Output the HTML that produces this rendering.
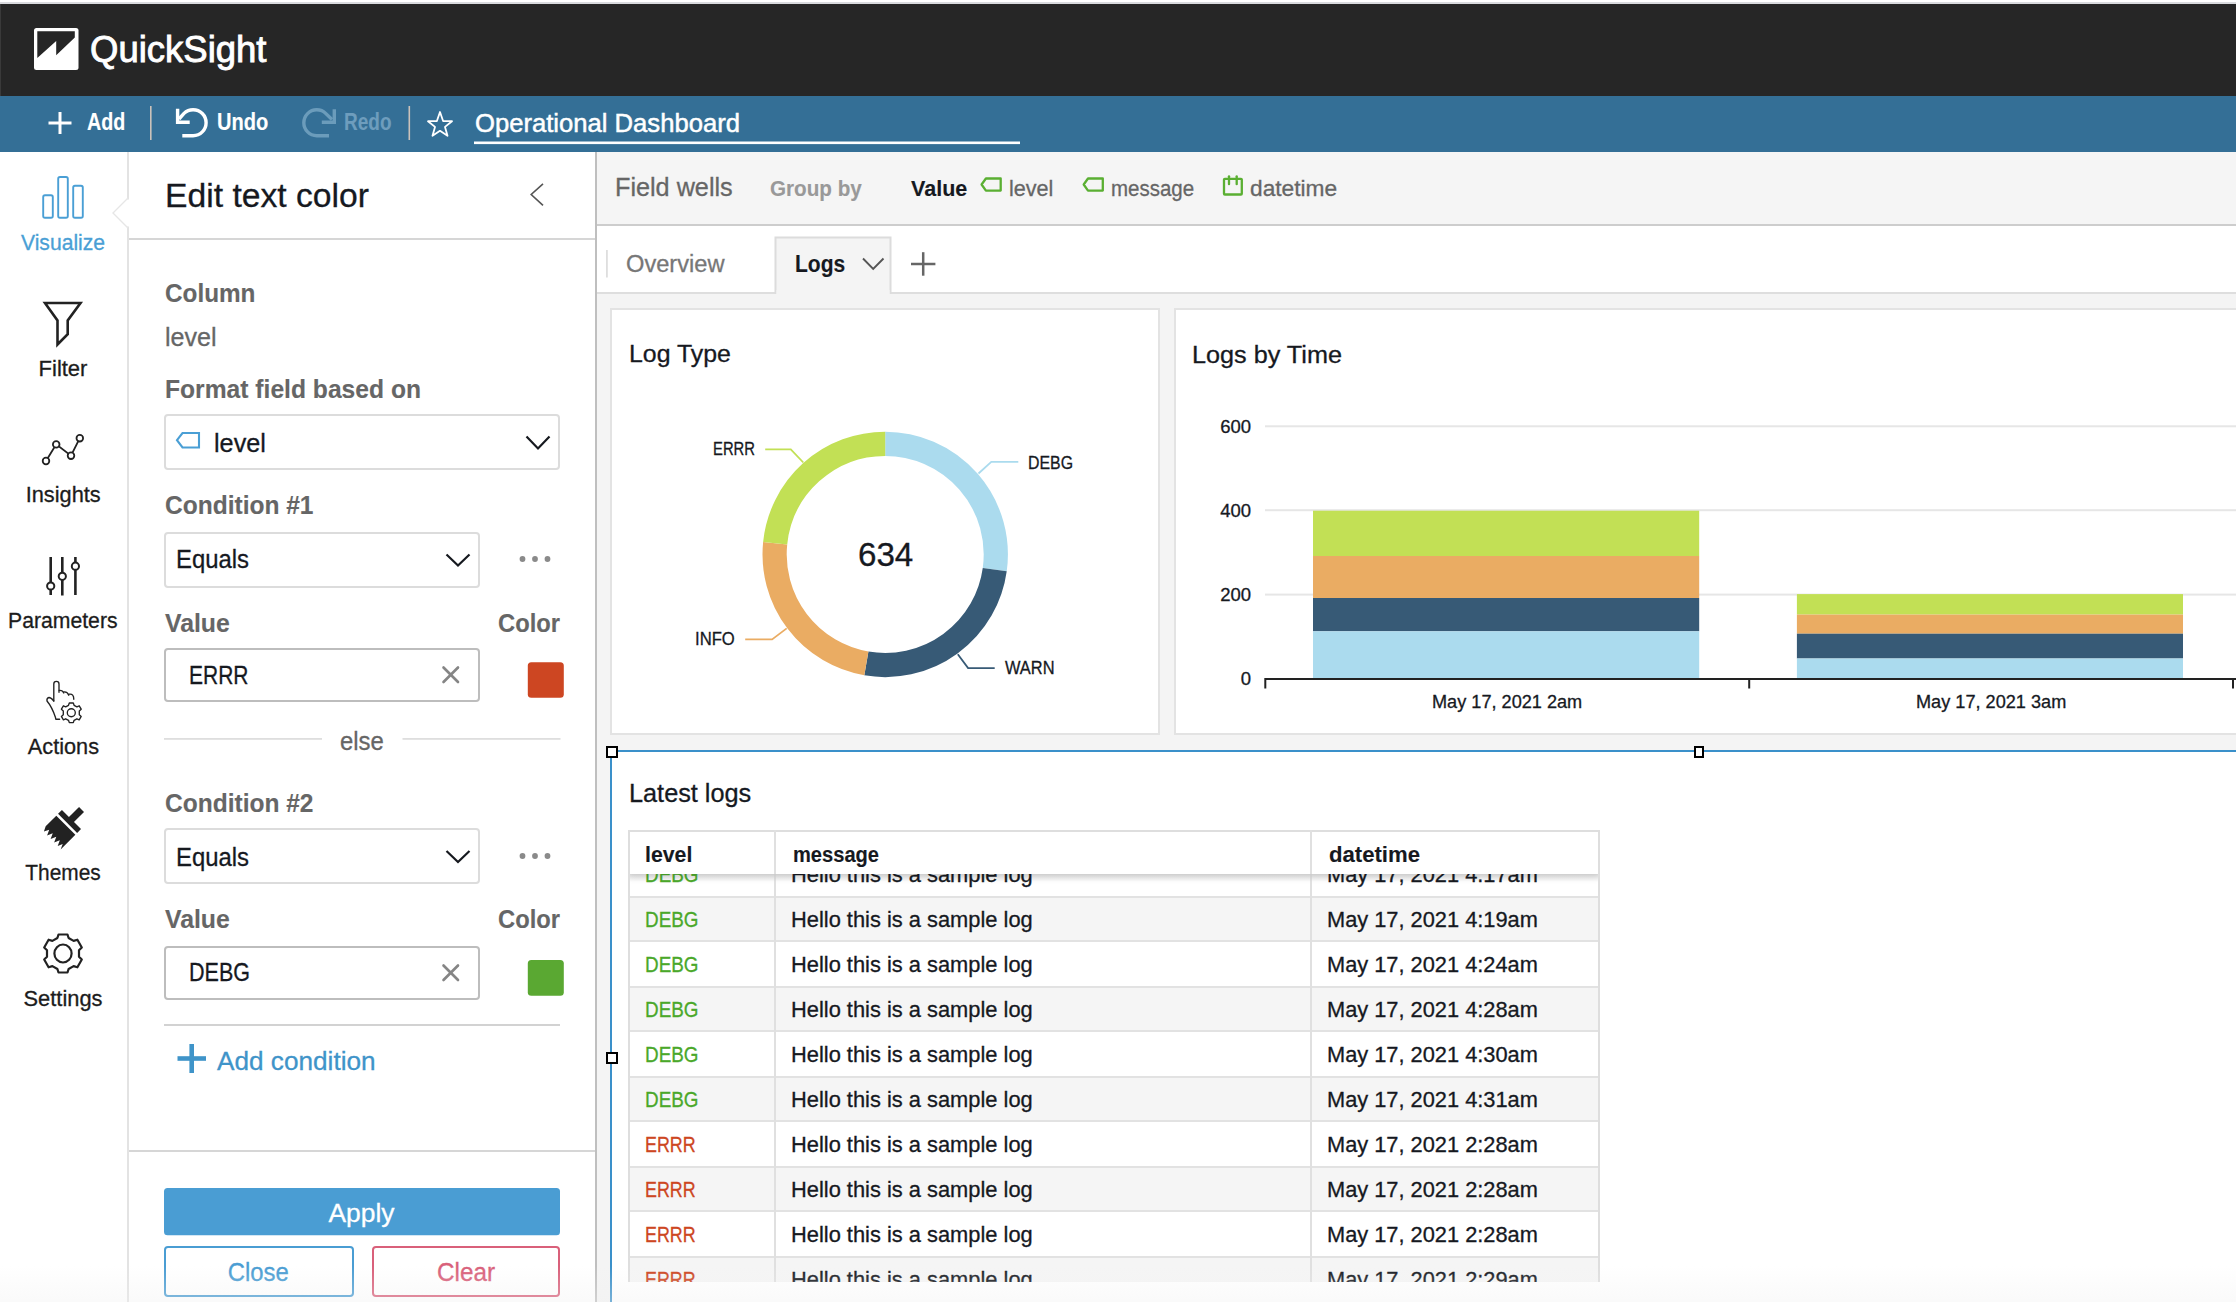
<!DOCTYPE html>
<html><head><meta charset="utf-8"><title>QuickSight</title>
<style>
html,body{margin:0;padding:0;}
body{width:2236px;height:1302px;overflow:hidden;position:relative;background:#fff;font-family:"Liberation Sans",sans-serif;}
.a{position:absolute;}
.t{position:absolute;line-height:1;white-space:nowrap;-webkit-text-stroke:0.3px currentColor;}
svg.a{overflow:visible;}
</style></head><body>
<div class="a" style="left:0px;top:0px;width:2236px;height:2px;background:#fff"></div>
<div class="a" style="left:0px;top:2px;width:2236px;height:2px;background:#d9dade"></div>
<div class="a" style="left:0px;top:4px;width:2236px;height:92px;background:#262626"></div>
<div class="a" style="left:0px;top:4px;width:1px;height:92px;background:#3a3a3a"></div>
<div class="a" style="left:0px;top:96px;width:2236px;height:56px;background:#346f96"></div>
<div class="a" style="left:0px;top:152px;width:127px;height:1150px;background:#fff"></div>
<div class="a" style="left:127px;top:152px;width:2px;height:1150px;background:#e3e3e3"></div>
<div class="a" style="left:129px;top:152px;width:466px;height:1150px;background:#fff"></div>
<div class="a" style="left:595px;top:152px;width:2px;height:1150px;background:#bfbfbf"></div>
<div class="a" style="left:129px;top:238px;width:466px;height:2px;background:#d6d6d6"></div>
<div class="a" style="left:129px;top:1150px;width:466px;height:2px;background:#d6d6d6"></div>
<div class="a" style="left:597px;top:152px;width:1639px;height:1150px;background:#f4f4f4"></div>
<div class="a" style="left:597px;top:152px;width:1639px;height:72px;background:#f5f5f5"></div>
<div class="a" style="left:597px;top:224px;width:1639px;height:2px;background:#cdcdcd"></div>
<div class="a" style="left:597px;top:226px;width:1639px;height:66px;background:#fff"></div>
<div class="a" style="left:597px;top:292px;width:1639px;height:2px;background:#dedede"></div>
<svg class="a" style="left:0;top:0" width="2236" height="152">
<rect x="34" y="28" width="44.5" height="42" rx="2.5" fill="#fff"/>
<polygon points="37.3,31.2 74.8,31.2 74.8,37.5 56.2,55.2 56.2,41 37.3,58" fill="#262626"/>
<g stroke="#fff" stroke-width="3" fill="none">
<line x1="48.5" y1="123" x2="71.5" y2="123"/><line x1="60" y1="112" x2="60" y2="134"/>
</g>
<rect x="150" y="106" width="1.6" height="34" fill="#cbc2ba"/>
<rect x="408.5" y="106" width="1.6" height="34" fill="#cbc2ba"/>
<g fill="none" stroke="#fff" stroke-width="3.4" stroke-linejoin="miter">
<path d="M182.3 135.7 H193.1 A13 13 0 0 0 193.1 109.7 A13 13 0 0 0 184 113.4 L179 119"/>
<path d="M177.6 108.8 V122.2 H189.7"/>
</g>
<g fill="none" stroke="#6b9cbb" stroke-width="3.4" stroke-linejoin="miter">
<path d="M329 135.7 H316.75 A12.95 12.95 0 0 1 316.75 109.8 A12.95 12.95 0 0 1 325.9 113.6 L332 119.5"/>
<path d="M334.3 109.2 V122.2 H321.8"/>
</g>
<polygon points="440,112 443.1,121 452,121.2 445,126.9 447.5,135.8 440,130.8 432.5,135.8 435,126.9 428,121.2 436.9,121" fill="none" stroke="#fff" stroke-width="1.8" stroke-linejoin="round"/>
<rect x="474" y="141.5" width="546" height="2.6" fill="#fff"/>
</svg>
<div class="t" style="left:89.90px;top:31px;font-size:37.30px;color:#fff;transform:scaleX(0.9786);transform-origin:left top;-webkit-text-stroke:0.9px #fff;">QuickSight</div>
<div class="t" style="left:87.00px;top:111px;font-size:23.30px;color:#fff;font-weight:700;-webkit-text-stroke:0.12px currentColor;transform:scaleX(0.8456);transform-origin:left top;">Add</div>
<div class="t" style="left:216.70px;top:111px;font-size:23.30px;color:#fff;font-weight:700;-webkit-text-stroke:0.12px currentColor;transform:scaleX(0.8618);transform-origin:left top;">Undo</div>
<div class="t" style="left:343.70px;top:111px;font-size:23.30px;color:#6e9dbd;font-weight:700;-webkit-text-stroke:0.12px currentColor;transform:scaleX(0.8154);transform-origin:left top;">Redo</div>
<div class="t" style="left:474.50px;top:110px;font-size:26.40px;color:#fff;transform:scaleX(0.9708);transform-origin:left top;-webkit-text-stroke:0.5px #fff;">Operational Dashboard</div>
<svg class="a" style="left:0;top:152px" width="127" height="1150" viewBox="0 152 127 1150">
<g fill="none" stroke="#4a9fd5" stroke-width="1.9">
<rect x="43.2" y="195.3" width="9.6" height="22.4" rx="1.8"/>
<rect x="58.2" y="177" width="9.6" height="40.7" rx="1.8"/>
<rect x="73.2" y="185.8" width="9.6" height="31.9" rx="1.8"/>
</g>
<polygon points="113,213 127,199 127,227" fill="#fff"/><rect x="126.5" y="199.5" width="3" height="27" fill="#fff"/>
<polyline points="128,198 113,213 128,228" fill="none" stroke="#e6e6e6" stroke-width="1.4"/>
<path d="M45 303 H80.5 L67.7 320.5 V334.2 L57.5 344.5 V320.5 Z" fill="none" stroke="#222" stroke-width="2.6" stroke-linejoin="miter"/>
<g stroke="#222" stroke-width="1.8" fill="#fff">
<polyline points="46,461 56.2,444.4 71,455.7 79.8,438.2" fill="none"/>
<circle cx="46" cy="461" r="3.3"/><circle cx="56.2" cy="444.4" r="3.3"/><circle cx="71" cy="455.7" r="3.3"/><circle cx="79.8" cy="438.2" r="3.3"/>
</g>
<g stroke="#222" stroke-width="2.6">
<line x1="50.7" y1="557" x2="50.7" y2="595"/><line x1="62.3" y1="557" x2="62.3" y2="595.5"/><line x1="75.4" y1="557" x2="75.4" y2="595"/>
</g>
<g stroke="#222" stroke-width="2" fill="#fff">
<circle cx="50.7" cy="586" r="3.6"/><circle cx="62.3" cy="576.3" r="3.6"/><circle cx="75.4" cy="566.2" r="3.6"/>
</g>
<g fill="none" stroke="#222" stroke-width="1.35" stroke-linejoin="round" stroke-linecap="round">
<path d="M53.8 701 V684 A2.6 2.6 0 0 1 59 684 V692.3"/>
<path d="M59.2 690.4 Q62.5 690 63.8 693"/>
<path d="M63.8 691.9 Q67.5 691.5 68.8 695.2"/>
<path d="M69.2 694.2 Q73.8 693.5 73.8 699.2"/>
<path d="M53.8 701 Q51 697.5 49 697.5 Q46.5 698 47 701 Q52 707 55.4 717.2 L55.8 719.2 H59.6"/>
</g>
<g transform="translate(71.3,712.8)" fill="none" stroke="#222" stroke-width="1.35">
<path d="M-2 -9.8 L2 -9.8 L2.8 -7.5 L5.6 -6 L7.9 -7 L9.9 -3.6 L8 -1.9 V1.9 L9.9 3.6 L7.9 7 L5.6 6 L2.8 7.5 L2 9.8 H-2 L-2.8 7.5 L-5.6 6 L-7.9 7 L-9.9 3.6 L-8 1.9 V-1.9 L-9.9 -3.6 L-7.9 -7 L-5.6 -6 L-2.8 -7.5 Z" stroke-linejoin="round"/>
<circle r="4"/>
</g>
<g transform="translate(63,828) rotate(45)" fill="#222">
<rect x="-3.5" y="-26.2" width="7" height="15"/>
<rect x="-13.5" y="-12" width="27" height="5.5"/>
<path d="M-13.5 -4 H13.5 V16.8 L11 11.5 L9 16.5 L6.5 11 L4 16.5 L1.5 11 L-1 16.5 L-3.5 11 L-6 16.5 L-8.5 11 L-11 16 L-13.5 11 Z"/>
</g>
<g transform="translate(63,953.5)" fill="none" stroke="#222" stroke-width="2.2" stroke-linejoin="round">
<path d="M-4.5 -19 H4.5 L5.6 -15.5 L10.6 -12.6 L14.4 -13.8 L18.8 -6 L16 -3.2 V3.2 L18.8 6 L14.4 13.8 L10.6 12.6 L5.6 15.5 L4.5 19 H-4.5 L-5.6 15.5 L-10.6 12.6 L-14.4 13.8 L-18.8 6 L-16 3.2 V-3.2 L-18.8 -6 L-14.4 -13.8 L-10.6 -12.6 L-5.6 -15.5 Z"/>
<ellipse rx="8.6" ry="9"/>
</g>
</svg>
<div class="t" style="left:19.97px;top:232px;font-size:21.60px;color:#4a9fd5;transform:scaleX(0.9784);transform-origin:center top;">Visualize</div>
<div class="t" style="left:39.30px;top:358px;font-size:21.60px;color:#1c1c1c;transform:scaleX(1.0187);transform-origin:center top;">Filter</div>
<div class="t" style="left:25.98px;top:484px;font-size:21.60px;color:#1c1c1c;transform:scaleX(1.0075);transform-origin:center top;">Insights</div>
<div class="t" style="left:7.38px;top:610px;font-size:21.60px;color:#1c1c1c;transform:scaleX(0.9808);transform-origin:center top;">Parameters</div>
<div class="t" style="left:27.58px;top:736px;font-size:21.60px;color:#1c1c1c;transform:scaleX(1.0052);transform-origin:center top;">Actions</div>
<div class="t" style="left:24.29px;top:862px;font-size:21.60px;color:#1c1c1c;transform:scaleX(0.9663);transform-origin:center top;">Themes</div>
<div class="t" style="left:24.28px;top:988px;font-size:21.60px;color:#1c1c1c;transform:scaleX(1.0122);transform-origin:center top;">Settings</div>
<svg class="a" style="left:129px;top:152px" width="466" height="1150" viewBox="129 152 466 1150">
<polyline points="543,183.8 531.2,194.5 543,205.3" fill="none" stroke="#555" stroke-width="1.6"/>
<rect x="165" y="415" width="394" height="54" rx="3" fill="#fff" stroke="#dcdcdc" stroke-width="2"/>
<path d="M177 440.2 L182.5 433 H199 V447.5 H182.5 Z" fill="none" stroke="#4a9fd5" stroke-width="2.1"/>
<polyline points="526.5,436.5 538,448.5 549.5,436.5" fill="none" stroke="#16191f" stroke-width="2.2"/>
<rect x="165" y="533" width="314" height="54" rx="3" fill="#fff" stroke="#dcdcdc" stroke-width="2"/>
<polyline points="446.5,554.5 458,565.5 469.5,554.5" fill="none" stroke="#16191f" stroke-width="2.2"/>
<g fill="#8a8a8a"><circle cx="522.5" cy="559" r="2.9"/><circle cx="535" cy="559" r="2.9"/><circle cx="547.5" cy="559" r="2.9"/></g>
<rect x="165" y="649" width="314" height="52" rx="3" fill="#fff" stroke="#bdbdbd" stroke-width="2"/>
<g stroke="#858585" stroke-width="2.6" stroke-linecap="round"><line x1="443.5" y1="667.5" x2="458" y2="682"/><line x1="458" y1="667.5" x2="443.5" y2="682"/></g>
<rect x="527.8" y="662.3" width="36" height="35.4" rx="3.5" fill="#cd4622"/>
<rect x="164" y="738" width="158" height="1.8" fill="#dedede"/>
<rect x="402.5" y="738" width="158" height="1.8" fill="#dedede"/>
<rect x="165" y="829" width="314" height="54" rx="3" fill="#fff" stroke="#dcdcdc" stroke-width="2"/>
<polyline points="446.5,851 458,862 469.5,851" fill="none" stroke="#16191f" stroke-width="2.2"/>
<g fill="#8a8a8a"><circle cx="522.5" cy="856" r="2.9"/><circle cx="535" cy="856" r="2.9"/><circle cx="547.5" cy="856" r="2.9"/></g>
<rect x="165" y="947" width="314" height="52" rx="3" fill="#fff" stroke="#bdbdbd" stroke-width="2"/>
<g stroke="#858585" stroke-width="2.6" stroke-linecap="round"><line x1="443.5" y1="965.5" x2="458" y2="980"/><line x1="458" y1="965.5" x2="443.5" y2="980"/></g>
<rect x="527.8" y="960" width="36" height="35.8" rx="3.5" fill="#5aa832"/>
<rect x="164" y="1024" width="396" height="2" fill="#d2d2d2"/>
<g stroke="#3f94c9" stroke-width="4.6"><line x1="177.5" y1="1058.5" x2="206" y2="1058.5"/><line x1="191.7" y1="1044" x2="191.7" y2="1073"/></g>
<rect x="164" y="1188" width="396" height="47.3" rx="3.5" fill="#4a9dd3"/>
<rect x="165" y="1247" width="188" height="49" rx="3" fill="#fff" stroke="#4a9dd3" stroke-width="2"/>
<rect x="373" y="1247" width="186" height="49" rx="3" fill="#fff" stroke="#d9607a" stroke-width="2"/>
</svg>
<div class="t" style="left:165.00px;top:179px;font-size:33.00px;color:#16191f;transform:scaleX(1.0204);transform-origin:left top;">Edit text color</div>
<div class="t" style="left:165.20px;top:280px;font-size:26.00px;color:#666;font-weight:700;-webkit-text-stroke:0.12px currentColor;transform:scaleX(0.9342);transform-origin:left top;">Column</div>
<div class="t" style="left:165.20px;top:324px;font-size:26.00px;color:#666;transform:scaleX(0.9650);transform-origin:left top;">level</div>
<div class="t" style="left:165.00px;top:376px;font-size:26.00px;color:#666;font-weight:700;-webkit-text-stroke:0.12px currentColor;transform:scaleX(0.9476);transform-origin:left top;">Format field based on</div>
<div class="t" style="left:213.90px;top:431px;font-size:25.50px;color:#16191f;transform:scaleX(0.9896);transform-origin:left top;">level</div>
<div class="t" style="left:165.00px;top:492px;font-size:26.00px;color:#666;font-weight:700;-webkit-text-stroke:0.12px currentColor;transform:scaleX(0.9432);transform-origin:left top;">Condition #1</div>
<div class="t" style="left:176.00px;top:546px;font-size:26.50px;color:#16191f;transform:scaleX(0.9009);transform-origin:left top;">Equals</div>
<div class="t" style="left:165.00px;top:610px;font-size:26.00px;color:#666;font-weight:700;-webkit-text-stroke:0.12px currentColor;transform:scaleX(0.9539);transform-origin:left top;">Value</div>
<div class="t" style="left:497.70px;top:610px;font-size:26.00px;color:#666;font-weight:700;-webkit-text-stroke:0.12px currentColor;transform:scaleX(0.9133);transform-origin:left top;">Color</div>
<div class="t" style="left:188.50px;top:663px;font-size:25.20px;color:#16191f;transform:scaleX(0.8333);transform-origin:left top;">ERRR</div>
<div class="t" style="left:339.90px;top:729px;font-size:25.50px;color:#666;transform:scaleX(0.9363);transform-origin:left top;">else</div>
<div class="t" style="left:165.00px;top:790px;font-size:26.00px;color:#666;font-weight:700;-webkit-text-stroke:0.12px currentColor;transform:scaleX(0.9432);transform-origin:left top;">Condition #2</div>
<div class="t" style="left:176.00px;top:844px;font-size:26.50px;color:#16191f;transform:scaleX(0.9009);transform-origin:left top;">Equals</div>
<div class="t" style="left:165.00px;top:906px;font-size:26.00px;color:#666;font-weight:700;-webkit-text-stroke:0.12px currentColor;transform:scaleX(0.9539);transform-origin:left top;">Value</div>
<div class="t" style="left:497.70px;top:906px;font-size:26.00px;color:#666;font-weight:700;-webkit-text-stroke:0.12px currentColor;transform:scaleX(0.9133);transform-origin:left top;">Color</div>
<div class="t" style="left:188.50px;top:960px;font-size:25.20px;color:#16191f;transform:scaleX(0.8541);transform-origin:left top;">DEBG</div>
<div class="t" style="left:217.00px;top:1048px;font-size:26.00px;color:#3f94c9;transform:scaleX(1.0066);transform-origin:left top;">Add condition</div>
<div class="t" style="left:329.48px;top:1200px;font-size:26.00px;color:#fff;transform:scaleX(1.0148);transform-origin:center top;">Apply</div>
<div class="t" style="left:225.46px;top:1259px;font-size:26.00px;color:#4a9dd3;transform:scaleX(0.9177);transform-origin:center top;">Close</div>
<div class="t" style="left:434.93px;top:1259px;font-size:26.00px;color:#d9607a;transform:scaleX(0.9335);transform-origin:center top;">Clear</div>
<svg class="a" style="left:597px;top:152px" width="1639" height="160" viewBox="597 152 1639 160">
<path d="M981.6 184.5 L985.9 178.5 H1000.7 V190.6 H985.9 Z" fill="none" stroke="#5aaf32" stroke-width="2.3" stroke-linejoin="round"/>
<path d="M1083.7 184.5 L1088 178.5 H1102.8 V190.6 H1088 Z" fill="none" stroke="#5aaf32" stroke-width="2.3" stroke-linejoin="round"/>
<g fill="none" stroke="#5aaf32" stroke-width="2.3" stroke-linecap="round"><rect x="1224" y="178.8" width="17.8" height="15.7" rx="0.8"/><line x1="1229" y1="176.3" x2="1229" y2="184.2"/><line x1="1236.7" y1="176.3" x2="1236.7" y2="184.2"/></g>
<rect x="606" y="250" width="1.8" height="27.5" fill="#dedede"/>
<path d="M775.5 294 V237.5 H890.5 V294" fill="#f4f4f4" stroke="#dcdcdc" stroke-width="2"/><rect x="776.5" y="290" width="113" height="5" fill="#f4f4f4"/>
<polyline points="863,258.5 873.2,269 883.5,258.5" fill="none" stroke="#555" stroke-width="1.9"/>
<g stroke="#666" stroke-width="2.5"><line x1="911" y1="264" x2="935.4" y2="264"/><line x1="923.2" y1="252.2" x2="923.2" y2="275.7"/></g>
</svg>
<div class="t" style="left:615.10px;top:175px;font-size:25.80px;color:#666;transform:scaleX(0.9773);transform-origin:left top;">Field wells</div>
<div class="t" style="left:770.30px;top:177px;font-size:22.70px;color:#999;font-weight:700;-webkit-text-stroke:0.12px currentColor;transform:scaleX(0.9109);transform-origin:left top;">Group by</div>
<div class="t" style="left:911.20px;top:178px;font-size:22.20px;color:#16191f;font-weight:700;-webkit-text-stroke:0.12px currentColor;transform:scaleX(0.9706);transform-origin:left top;">Value</div>
<div class="t" style="left:1008.70px;top:178px;font-size:22.20px;color:#666;transform:scaleX(0.9725);transform-origin:left top;">level</div>
<div class="t" style="left:1110.60px;top:178px;font-size:22.20px;color:#666;transform:scaleX(0.9236);transform-origin:left top;">message</div>
<div class="t" style="left:1250.20px;top:178px;font-size:22.20px;color:#666;transform:scaleX(1.0241);transform-origin:left top;">datetime</div>
<div class="t" style="left:625.60px;top:252px;font-size:24.70px;color:#777;transform:scaleX(0.9579);transform-origin:left top;">Overview</div>
<div class="t" style="left:795.00px;top:252px;font-size:24.00px;color:#16191f;font-weight:700;-webkit-text-stroke:0.12px currentColor;transform:scaleX(0.8757);transform-origin:left top;">Logs</div>
<div class="a" style="left:611px;top:309px;width:548px;height:425px;background:#fff;border:2px solid #e3e3e3;box-sizing:border-box;width:550px;height:427px;left:610px;top:308px"></div>
<div class="a" style="left:1174px;top:308px;width:1100px;height:427px;background:#fff;border:2px solid #e3e3e3;box-sizing:border-box"></div>
<div class="t" style="left:629.40px;top:342px;font-size:24.70px;color:#16191f;transform:scaleX(1.0082);transform-origin:left top;">Log Type</div>
<div class="t" style="left:1191.50px;top:343px;font-size:24.70px;color:#16191f;transform:scaleX(1.0211);transform-origin:left top;">Logs by Time</div>
<svg class="a" style="left:0;top:0" width="2236" height="750">
<path d="M885.20 443.80 A110.6 110.6 0 0 1 994.75 569.60" fill="none" stroke="#abdbee" stroke-width="24.2"/>
<path d="M994.75 569.60 A110.6 110.6 0 0 1 866.37 663.39" fill="none" stroke="#375a76" stroke-width="24.2"/>
<path d="M866.37 663.39 A110.6 110.6 0 0 1 775.17 543.22" fill="none" stroke="#eaac63" stroke-width="24.2"/>
<path d="M775.17 543.22 A110.6 110.6 0 0 1 885.20 443.80" fill="none" stroke="#c2e055" stroke-width="24.2"/>
<polyline points="765.2,449.3 790.8,449.3 803.3,462.5" fill="none" stroke="#c2e055" stroke-width="1.8"/>
<polyline points="1018.3,461.8 991.3,461.8 978.5,473.5" fill="none" stroke="#abdbee" stroke-width="1.8"/>
<polyline points="745.2,639.4 772.1,639.4 786.7,628.4" fill="none" stroke="#eaac63" stroke-width="1.8"/>
<polyline points="994.7,668.1 968.1,668.1 957.8,654.3" fill="none" stroke="#375a76" stroke-width="1.8"/>
<rect x="1265" y="425.3" width="971" height="2" fill="#e6e6e6"/>
<rect x="1265" y="509.2" width="971" height="2" fill="#e6e6e6"/>
<rect x="1265" y="593.6" width="971" height="2" fill="#e6e6e6"/>
<rect x="1313" y="510.7" width="386.2" height="45.3" fill="#c2e055"/>
<rect x="1313" y="556" width="386.2" height="42.0" fill="#eaac63"/>
<rect x="1313" y="598" width="386.2" height="33.3" fill="#375a76"/>
<rect x="1313" y="631.3" width="386.2" height="47.7" fill="#abdbee"/>
<rect x="1796.9" y="594.1" width="386.1" height="20.5" fill="#c2e055"/>
<rect x="1796.9" y="614.6" width="386.1" height="19.1" fill="#eaac63"/>
<rect x="1796.9" y="633.7" width="386.1" height="24.8" fill="#375a76"/>
<rect x="1796.9" y="658.5" width="386.1" height="20.5" fill="#abdbee"/>
<rect x="1265" y="678" width="971" height="2" fill="#222"/>
<rect x="1264.3" y="678" width="2" height="10.5" fill="#222"/>
<rect x="1748.2" y="678" width="2" height="10.5" fill="#222"/>
<rect x="2232.0" y="678" width="2" height="10.5" fill="#222"/>
</svg>
<div class="t" style="left:857.50px;top:539px;font-size:32.40px;color:#16191f;transform:scaleX(1.0230);transform-origin:left top;">634</div>
<div class="t" style="left:713.40px;top:440px;font-size:18.50px;color:#16191f;transform:scaleX(0.8012);transform-origin:left top;">ERRR</div>
<div class="t" style="left:1028.00px;top:454px;font-size:18.50px;color:#16191f;transform:scaleX(0.8583);transform-origin:left top;">DEBG</div>
<div class="t" style="left:695.00px;top:630px;font-size:18.50px;color:#16191f;transform:scaleX(0.9006);transform-origin:left top;">INFO</div>
<div class="t" style="left:1005.00px;top:659px;font-size:18.50px;color:#16191f;transform:scaleX(0.8866);transform-origin:left top;">WARN</div>
<div class="t" style="left:1220.13px;top:418px;font-size:18.50px;color:#16191f;">600</div>
<div class="t" style="left:1220.13px;top:502px;font-size:18.50px;color:#16191f;">400</div>
<div class="t" style="left:1220.13px;top:586px;font-size:18.50px;color:#16191f;">200</div>
<div class="t" style="left:1240.71px;top:670px;font-size:18.50px;color:#16191f;">0</div>
<div class="t" style="left:1432.20px;top:693px;font-size:18.50px;color:#16191f;transform:scaleX(0.9802);transform-origin:left top;">May 17, 2021 2am</div>
<div class="t" style="left:1916.00px;top:693px;font-size:18.50px;color:#16191f;transform:scaleX(0.9809);transform-origin:left top;">May 17, 2021 3am</div>
<div class="a" style="left:610px;top:750px;width:1626px;height:552px;background:#fff"></div>
<div class="a" style="left:610px;top:750px;width:1626px;height:2px;background:#3a90ca"></div>
<div class="a" style="left:610px;top:750px;width:2px;height:552px;background:#3a90ca"></div>
<div class="t" style="left:629.00px;top:781px;font-size:25.70px;color:#16191f;transform:scaleX(0.9839);transform-origin:left top;">Latest logs</div>
<div class="a" style="left:628px;top:830px;width:972px;height:452px;overflow:hidden;background:#fff">
<div class="a" style="left:0;top:22px;width:972px;height:44px;background:#fff"></div>
<div class="a" style="left:0;top:66px;width:972px;height:2px;background:#e2e2e2"></div>
<div class="a" style="left:0;top:68px;width:972px;height:42px;background:#f5f5f5"></div>
<div class="a" style="left:0;top:110px;width:972px;height:2px;background:#e2e2e2"></div>
<div class="a" style="left:0;top:112px;width:972px;height:44px;background:#fff"></div>
<div class="a" style="left:0;top:156px;width:972px;height:2px;background:#e2e2e2"></div>
<div class="a" style="left:0;top:158px;width:972px;height:42px;background:#f5f5f5"></div>
<div class="a" style="left:0;top:200px;width:972px;height:2px;background:#e2e2e2"></div>
<div class="a" style="left:0;top:202px;width:972px;height:44px;background:#fff"></div>
<div class="a" style="left:0;top:246px;width:972px;height:2px;background:#e2e2e2"></div>
<div class="a" style="left:0;top:248px;width:972px;height:42px;background:#f5f5f5"></div>
<div class="a" style="left:0;top:290px;width:972px;height:2px;background:#e2e2e2"></div>
<div class="a" style="left:0;top:292px;width:972px;height:44px;background:#fff"></div>
<div class="a" style="left:0;top:336px;width:972px;height:2px;background:#e2e2e2"></div>
<div class="a" style="left:0;top:338px;width:972px;height:42px;background:#f5f5f5"></div>
<div class="a" style="left:0;top:380px;width:972px;height:2px;background:#e2e2e2"></div>
<div class="a" style="left:0;top:382px;width:972px;height:44px;background:#fff"></div>
<div class="a" style="left:0;top:426px;width:972px;height:2px;background:#e2e2e2"></div>
<div class="a" style="left:0;top:428px;width:972px;height:42px;background:#f5f5f5"></div>
<div class="a" style="left:0;top:470px;width:972px;height:2px;background:#e2e2e2"></div>
<div class="a" style="left:0;top:0;width:972px;height:44px;background:#fff;box-shadow:0 3px 7px rgba(0,0,0,0.14)"></div>
</div>
<div class="a" style="left:0;top:874px;width:2236px;height:408px;overflow:hidden">
<div class="t" style="left:645.30px;top:-10px;font-size:21.80px;color:#4aa82a;transform:scaleX(0.8660);transform-origin:left top;">DEBG</div>
<div class="t" style="left:790.90px;top:-9px;font-size:21.40px;color:#16191f;transform:scaleX(1.0216);transform-origin:left top;">Hello this is a sample log</div>
<div class="t" style="left:1327.00px;top:-9px;font-size:21.40px;color:#16191f;transform:scaleX(1.0193);transform-origin:left top;">May 17, 2021 4:17am</div>
<div class="t" style="left:645.30px;top:35px;font-size:21.80px;color:#4aa82a;transform:scaleX(0.8660);transform-origin:left top;">DEBG</div>
<div class="t" style="left:790.90px;top:36px;font-size:21.40px;color:#16191f;transform:scaleX(1.0216);transform-origin:left top;">Hello this is a sample log</div>
<div class="t" style="left:1327.00px;top:36px;font-size:21.40px;color:#16191f;transform:scaleX(1.0193);transform-origin:left top;">May 17, 2021 4:19am</div>
<div class="t" style="left:645.30px;top:80px;font-size:21.80px;color:#4aa82a;transform:scaleX(0.8660);transform-origin:left top;">DEBG</div>
<div class="t" style="left:790.90px;top:81px;font-size:21.40px;color:#16191f;transform:scaleX(1.0216);transform-origin:left top;">Hello this is a sample log</div>
<div class="t" style="left:1327.00px;top:81px;font-size:21.40px;color:#16191f;transform:scaleX(1.0193);transform-origin:left top;">May 17, 2021 4:24am</div>
<div class="t" style="left:645.30px;top:125px;font-size:21.80px;color:#4aa82a;transform:scaleX(0.8660);transform-origin:left top;">DEBG</div>
<div class="t" style="left:790.90px;top:126px;font-size:21.40px;color:#16191f;transform:scaleX(1.0216);transform-origin:left top;">Hello this is a sample log</div>
<div class="t" style="left:1327.00px;top:126px;font-size:21.40px;color:#16191f;transform:scaleX(1.0193);transform-origin:left top;">May 17, 2021 4:28am</div>
<div class="t" style="left:645.30px;top:170px;font-size:21.80px;color:#4aa82a;transform:scaleX(0.8660);transform-origin:left top;">DEBG</div>
<div class="t" style="left:790.90px;top:171px;font-size:21.40px;color:#16191f;transform:scaleX(1.0216);transform-origin:left top;">Hello this is a sample log</div>
<div class="t" style="left:1327.00px;top:171px;font-size:21.40px;color:#16191f;transform:scaleX(1.0193);transform-origin:left top;">May 17, 2021 4:30am</div>
<div class="t" style="left:645.30px;top:215px;font-size:21.80px;color:#4aa82a;transform:scaleX(0.8660);transform-origin:left top;">DEBG</div>
<div class="t" style="left:790.90px;top:216px;font-size:21.40px;color:#16191f;transform:scaleX(1.0216);transform-origin:left top;">Hello this is a sample log</div>
<div class="t" style="left:1327.00px;top:216px;font-size:21.40px;color:#16191f;transform:scaleX(1.0193);transform-origin:left top;">May 17, 2021 4:31am</div>
<div class="t" style="left:645.30px;top:260px;font-size:21.80px;color:#cd4622;transform:scaleX(0.8208);transform-origin:left top;">ERRR</div>
<div class="t" style="left:790.90px;top:261px;font-size:21.40px;color:#16191f;transform:scaleX(1.0216);transform-origin:left top;">Hello this is a sample log</div>
<div class="t" style="left:1327.00px;top:261px;font-size:21.40px;color:#16191f;transform:scaleX(1.0193);transform-origin:left top;">May 17, 2021 2:28am</div>
<div class="t" style="left:645.30px;top:305px;font-size:21.80px;color:#cd4622;transform:scaleX(0.8208);transform-origin:left top;">ERRR</div>
<div class="t" style="left:790.90px;top:306px;font-size:21.40px;color:#16191f;transform:scaleX(1.0216);transform-origin:left top;">Hello this is a sample log</div>
<div class="t" style="left:1327.00px;top:306px;font-size:21.40px;color:#16191f;transform:scaleX(1.0193);transform-origin:left top;">May 17, 2021 2:28am</div>
<div class="t" style="left:645.30px;top:350px;font-size:21.80px;color:#cd4622;transform:scaleX(0.8208);transform-origin:left top;">ERRR</div>
<div class="t" style="left:790.90px;top:351px;font-size:21.40px;color:#16191f;transform:scaleX(1.0216);transform-origin:left top;">Hello this is a sample log</div>
<div class="t" style="left:1327.00px;top:351px;font-size:21.40px;color:#16191f;transform:scaleX(1.0193);transform-origin:left top;">May 17, 2021 2:28am</div>
<div class="t" style="left:645.30px;top:395px;font-size:21.80px;color:#cd4622;transform:scaleX(0.8208);transform-origin:left top;">ERRR</div>
<div class="t" style="left:790.90px;top:396px;font-size:21.40px;color:#16191f;transform:scaleX(1.0216);transform-origin:left top;">Hello this is a sample log</div>
<div class="t" style="left:1327.00px;top:396px;font-size:21.40px;color:#16191f;transform:scaleX(1.0193);transform-origin:left top;">May 17, 2021 2:29am</div>
</div>
<div class="a" style="left:630px;top:832px;width:968px;height:42px;background:#fff"></div>
<div class="a" style="left:628px;top:830px;width:972px;height:2px;background:#dedede"></div>
<div class="a" style="left:628px;top:830px;width:2px;height:452px;background:#dedede"></div>
<div class="a" style="left:1598px;top:830px;width:2px;height:452px;background:#dedede"></div>
<div class="a" style="left:774px;top:830px;width:2px;height:452px;background:#e0e0e0"></div>
<div class="a" style="left:1310px;top:830px;width:2px;height:452px;background:#e0e0e0"></div>
<div class="a" style="left:630px;top:874px;width:968px;height:8px;background:linear-gradient(rgba(0,0,0,0.09),rgba(0,0,0,0))"></div>
<div class="t" style="left:645.30px;top:845px;font-size:21.50px;color:#16191f;font-weight:700;-webkit-text-stroke:0.12px currentColor;transform:scaleX(0.9892);transform-origin:left top;">level</div>
<div class="t" style="left:792.80px;top:845px;font-size:21.50px;color:#16191f;font-weight:700;-webkit-text-stroke:0.12px currentColor;transform:scaleX(0.9344);transform-origin:left top;">message</div>
<div class="t" style="left:1328.50px;top:845px;font-size:21.50px;color:#16191f;font-weight:700;-webkit-text-stroke:0.12px currentColor;transform:scaleX(1.0293);transform-origin:left top;">datetime</div>
<div class="a" style="left:606px;top:746px;width:12px;height:12px;background:#fff;border:2px solid #000;box-sizing:border-box"></div>
<div class="a" style="left:1694px;top:746px;width:10px;height:12px;background:#fff;border:2px solid #000;box-sizing:border-box"></div>
<div class="a" style="left:606px;top:1052px;width:12px;height:12px;background:#fff;border:2px solid #000;box-sizing:border-box"></div>
<div class="a" style="left:0;top:1266px;width:2236px;height:36px;background:linear-gradient(rgba(240,240,240,0),rgba(240,240,240,0.35))"></div>
</body></html>
